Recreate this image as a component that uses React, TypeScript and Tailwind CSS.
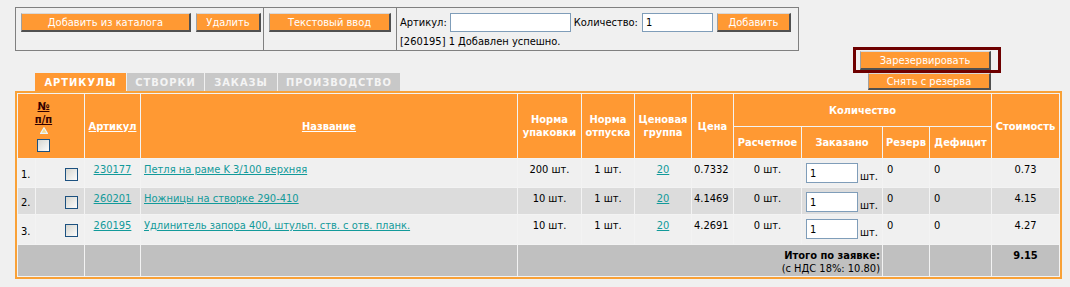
import React from 'react';

const rows = [
  { n: '1.', art: '230177', name: 'Петля на раме K 3/100 верхняя', pack: '200 шт.', price: '0.7332', cost: '0.73', h: 'h-[28px]', bg: 'bg-[#f0f0f0]' },
  { n: '2.', art: '260201', name: 'Ножницы на створке 290-410', pack: '10 шт.', price: '4.1469', cost: '4.15', h: 'h-[26px]', bg: 'bg-[#dcdcdc]' },
  { n: '3.', art: '260195', name: 'Удлинитель запора 400, штульп. ств. с отв. планк.', pack: '10 шт.', price: '4.2691', cost: '4.27', h: 'h-[29px]', bg: 'bg-[#f0f0f0]' },
];

const tabs = [
  { label: 'АРТИКУЛЫ', w: 'w-[91px]', active: true },
  { label: 'СТВОРКИ', w: 'w-[77px]', active: false },
  { label: 'ЗАКАЗЫ', w: 'w-[72px]', active: false },
  { label: 'ПРОИЗВОДСТВО', w: 'w-[122px]', active: false },
];

const Btn = ({ children, className = '' }: { children: React.ReactNode; className?: string }) => (
  <button
    className={`bg-[#ff9933] text-white text-[11px] leading-none border-t border-l border-t-[#d8d8d8] border-l-[#a0a0a0] border-r-2 border-b-2 border-r-[#505050] border-b-[#505050] ${className}`}
  >
    {children}
  </button>
);

const Check = () => (
  <span className="inline-block w-[13px] h-[13px] border border-[#1c5180] bg-linear-to-br from-[#d6d6d0] to-[#fcfcfc] align-middle" />
);

const th = 'border-0 text-white font-bold text-[11px] leading-[13px] align-middle text-center';
const td = 'align-top pt-[4px] text-[11px] leading-[13px]';
const link = 'text-[#129a9a] underline';

export default function App() {
  return (
    <div className="w-[1070px] h-[287px] bg-[#f0f0f0] overflow-hidden text-black font-['DejaVu_Sans_Condensed','DejaVu_Sans',sans-serif] text-[11px] leading-[13px]">
      {/* панель инструментов */}
      <div className="mt-[7px] ml-[15px] w-[784px] h-[44px] border border-[#808080] flex">
        <div className="w-[248px] border-r border-[#808080] flex gap-[5px] pl-[5px] pt-[5px]">
          <Btn className="w-[170px] h-[19px]">Добавить из каталога</Btn>
          <Btn className="w-[65px] h-[19px]">Удалить</Btn>
        </div>
        <div className="w-[133px] border-r border-[#808080] pl-[5px] pt-[5px]">
          <Btn className="w-[122px] h-[19px]">Текстовый ввод</Btn>
        </div>
        <div className="flex-1 pl-[3px] pt-[5px]">
          <div className="flex items-center h-[19px]">
            <span className="mr-[3px]">Артикул:</span>
            <input className="w-[121px] h-[19px] bg-white border border-[#7f9db9] outline-none px-1 text-[11px]" />
            <span className="ml-[3px] mr-[4px]">Количество:</span>
            <input defaultValue="1" className="w-[71px] h-[19px] bg-white border border-[#7f9db9] outline-none px-[3px] text-[11px]" />
            <Btn className="ml-[4px] w-[74px] h-[19px]">Добавить</Btn>
          </div>
          <div className="mt-[3px]">[260195] 1 Добавлен успешно.</div>
        </div>
      </div>

      {/* вкладки и резерв */}
      <div className="-mt-[4px] flex items-end justify-between">
        <div className="ml-[35px] flex gap-px">
          {tabs.map((t) => (
            <div
              key={t.label}
              className={`${t.w} h-[18px] flex items-center justify-center font-bold text-[11px] tracking-[1px] ${
                t.active ? 'bg-[#ff9933] text-white' : 'bg-[#c8c8c8] text-[#f4f4f4]'
              }`}
            >
              {t.label}
            </div>
          ))}
        </div>
        <div className="mr-[69px] flex flex-col items-end pb-px">
          <div className="w-[148px] h-[26px] border-[3px] border-[#6e0000] pl-[4px] pt-px">
            <Btn className="w-[131px] h-[19px]">Зарезервировать</Btn>
          </div>
          <Btn className="mr-[10px] w-[123px] h-[17px]">Снять с резерва</Btn>
        </div>
      </div>

      {/* таблица */}
      <div className="ml-[15px] w-[1047px] border-2 border-[#f9a137]">
        <table className="table-fixed w-[1043px] border-separate border-spacing-px bg-[#f3f3f3]">
          <colgroup>
            <col className="w-[17px]" />
            <col className="w-[48px]" />
            <col className="w-[55px]" />
            <col className="w-[376px]" />
            <col className="w-[63px]" />
            <col className="w-[52px]" />
            <col className="w-[56px]" />
            <col className="w-[41px]" />
            <col className="w-[67px]" />
            <col className="w-[80px]" />
            <col className="w-[46px]" />
            <col className="w-[61px]" />
            <col className="w-[67px]" />
          </colgroup>
          <thead>
            <tr className="h-[32px] bg-[#ff9933]">
              <th rowSpan={2} colSpan={2} className={`${th} text-left pl-[15px]`}>
                <div className="inline-flex flex-col items-center w-[21px] text-[#330000]">
                  <span className="underline">№</span>
                  <span className="underline">п/п</span>
                  <svg width="8" height="7" viewBox="0 0 8 7" className="mt-[1px]">
                    <polygon points="4,0.8 7.3,6.3 0.7,6.3" fill="#f5d98a" stroke="#e6f6ff" strokeWidth="1.2" />
                  </svg>
                  <span className="mt-[5px] leading-none"><Check /></span>
                </div>
              </th>
              <th rowSpan={2} className={`${th} text-[#330000]`}><span className="underline">Артикул</span></th>
              <th rowSpan={2} className={`${th} text-[#330000]`}><span className="underline">Название</span></th>
              <th rowSpan={2} className={th}>Норма<br />упаковки</th>
              <th rowSpan={2} className={th}>Норма<br />отпуска</th>
              <th rowSpan={2} className={th}>Ценовая<br />группа</th>
              <th rowSpan={2} className={th}>Цена</th>
              <th colSpan={4} className={th}>Количество</th>
              <th rowSpan={2} className={th}>Стоимость</th>
            </tr>
            <tr className="h-[31px] bg-[#ff9933]">
              <th className={th}>Расчетное</th>
              <th className={th}>Заказано</th>
              <th className={th}>Резерв</th>
              <th className={th}>Дефицит</th>
            </tr>
          </thead>
          <tbody>
            {rows.map((r) => (
              <tr key={r.art} className={`${r.h} ${r.bg}`}>
                <td className="align-middle pl-[3px] pt-[3px]">{r.n}</td>
                <td className="align-middle pl-[29px] pt-[2px] leading-none"><Check /></td>
                <td className={`${td} text-center`}><span className={link}>{r.art}</span></td>
                <td className={`${td} pl-[3px]`}><span className={link}>{r.name}</span></td>
                <td className={`${td} text-center`}>{r.pack}</td>
                <td className={`${td} text-center`}>1 шт.</td>
                <td className={`${td} text-center`}><span className={link}>20</span></td>
                <td className={`${td} pl-[2px]`}>{r.price}</td>
                <td className={`${td} text-center`}>0 шт.</td>
                <td className="align-top pt-[4px] pl-[4px] whitespace-nowrap">
                  <input
                    defaultValue="1"
                    className="w-[52px] h-[20px] bg-white border border-[#7f9db9] outline-none px-[3px] text-[11px] align-bottom"
                  />
                  <span className="ml-[2px] align-bottom leading-[12px]">шт.</span>
                </td>
                <td className={`${td} pl-[4px]`}>0</td>
                <td className={`${td} pl-[4px]`}>0</td>
                <td className={`${td} text-center`}>{r.cost}</td>
              </tr>
            ))}
            <tr className="h-[31px] bg-[#c0c0c0]">
              <td colSpan={2} />
              <td />
              <td />
              <td colSpan={6} className={`${td} text-right pr-[2px]`}>
                <div className="font-bold">Итого по заявке:</div>
                <div>(с НДС 18%: 10.80)</div>
              </td>
              <td />
              <td />
              <td className={`${td} text-center font-bold`}>9.15</td>
            </tr>
          </tbody>
        </table>
      </div>
    </div>
  );
}
